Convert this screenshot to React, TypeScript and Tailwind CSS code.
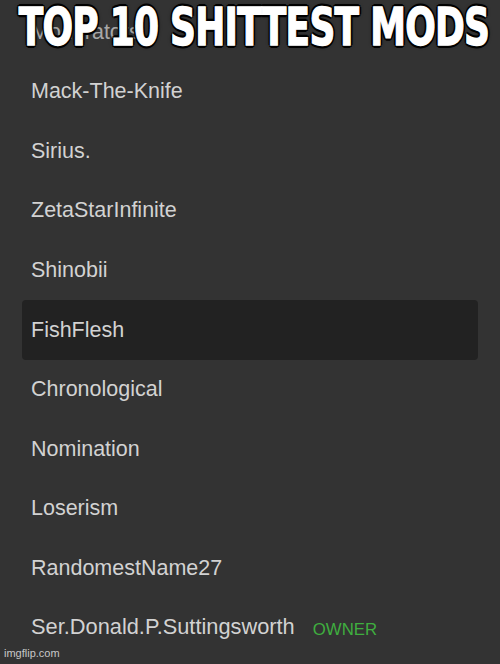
const members = [
  "Mack-The-Knife",
  "Sirius.",
  "ZetaStarInfinite",
  "Shinobii",
  "FishFlesh",
  "Chronological",
  "Nomination",
  "Loserism",
  "RandomestName27",
];

export default function App() {
  return (
    <div
      className="relative h-[664px] w-[500px] overflow-hidden bg-[#333333]"
      style={{ fontFamily: '"Liberation Sans", Arial, sans-serif' }}
    >
      <div className="flex flex-col pt-[2px]">
        <div className="mx-[22px] flex h-[59.6px] items-center px-[9px] text-[21.5px] text-[#a8a8a8]">
          Moderators
        </div>
        {members.map((name) => (
          <div
            key={name}
            className={
              name === "FishFlesh"
                ? "mx-[22px] flex h-[59.6px] items-center rounded-[4px] bg-[#222222] px-[9px] text-[21.5px] text-[#d2d2d2]"
                : "mx-[22px] flex h-[59.6px] items-center px-[9px] text-[21.5px] text-[#d2d2d2]"
            }
          >
            {name}
          </div>
        ))}
        <div className="mx-[22px] flex h-[59.6px] items-center gap-[18px] px-[9px] text-[21.8px] text-[#d2d2d2]">
          <span>Ser.Donald.P.Suttingsworth</span>
          <span className="mt-[3px] text-[16.8px] text-[#3fae3f]">OWNER</span>
        </div>
      </div>

      {/* meme caption */}
      <div className="absolute left-[-200px] right-[-200px] top-[1px] flex justify-center whitespace-nowrap pl-[8px]">
        <span
          className="inline-block text-[52px] font-bold leading-none text-white [transform:scaleX(0.69)]"
          style={{
            fontFamily: '"DejaVu Sans", sans-serif',
            letterSpacing: "-1px",
            WebkitTextStroke: "1.5px white",
            textShadow:
              "3px 0 0 #000, -3px 0 0 #000, 0 3px 0 #000, 0 -3px 0 #000, 2px 2px 0 #000, -2px -2px 0 #000, 2px -2px 0 #000, -2px 2px 0 #000, 0 0 5px #000",
          }}
        >
          TOP 10 SHITTEST MODS
        </span>
      </div>

      <div className="absolute bottom-[3px] left-[4px] text-[11px] text-[#c8c8c8]">
        imgflip.com
      </div>
    </div>
  );
}
